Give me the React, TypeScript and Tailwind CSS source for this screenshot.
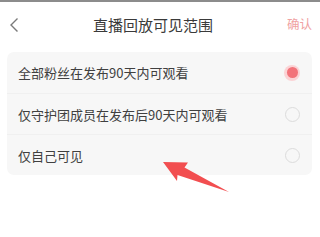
import React from "react";

const font = { fontFamily: '"Noto Sans CJK SC", "Noto Sans", sans-serif' };

function Radio({ checked }: { checked: boolean }) {
  if (checked) {
    return (
      <div className="flex h-[16px] w-[16px] items-center justify-center rounded-full bg-[#fbd3d5]">
        <div className="h-[11px] w-[11px] rounded-full bg-[#f2737a]" />
      </div>
    );
  }
  return <div className="h-[15px] w-[15px] rounded-full border border-[#dcdcdc]" />;
}

const rows = [
  { label: "全部粉丝在发布90天内可观看", checked: true },
  { label: "仅守护团成员在发布后90天内可观看", checked: false },
  { label: "仅自己可见", checked: false },
];

export default function App() {
  return (
    <div className="relative h-[237px] w-[320px] overflow-hidden bg-white" style={font}>
      <div className="h-[2px] bg-[#8c8c8c]" />
      <div className="flex h-[44px] items-center justify-between px-[8px] pt-[1px]">
        <svg width="10" height="16" viewBox="0 0 10 16" className="ml-[1px]">
          <path d="M8.5 1.5 L2 8 L8.5 14.5" fill="none" stroke="#7a7a7a" strokeWidth="1.4" />
        </svg>
        <div className="text-[15px] leading-none text-[#3a3a3a]">直播回放可见范围</div>
        <div className="text-[12.5px] leading-none text-[#f0a2a2]">确认</div>
      </div>
      <div className="mx-[7px] mt-[6px] w-[305px] overflow-hidden rounded-[7px] bg-[#f7f7f7]">
        {rows.map((r, i) => (
          <div
            key={i}
            className={`flex h-[41px] items-center justify-between pl-[11px] pr-[12px] ${i > 0 ? "border-t border-[#f0f0f0]" : ""}`}
          >
            <span className="text-[13px] leading-none text-[#404040]">{r.label}</span>
            <Radio checked={r.checked} />
          </div>
        ))}
      </div>
      <svg className="absolute left-0 top-0" width="320" height="237" viewBox="0 0 320 237">
        <polygon
          points="163,162 188,162.5 184.5,167.5 229,192 177.5,175 177,181"
          fill="#f24e50"
        />
      </svg>
    </div>
  );
}
